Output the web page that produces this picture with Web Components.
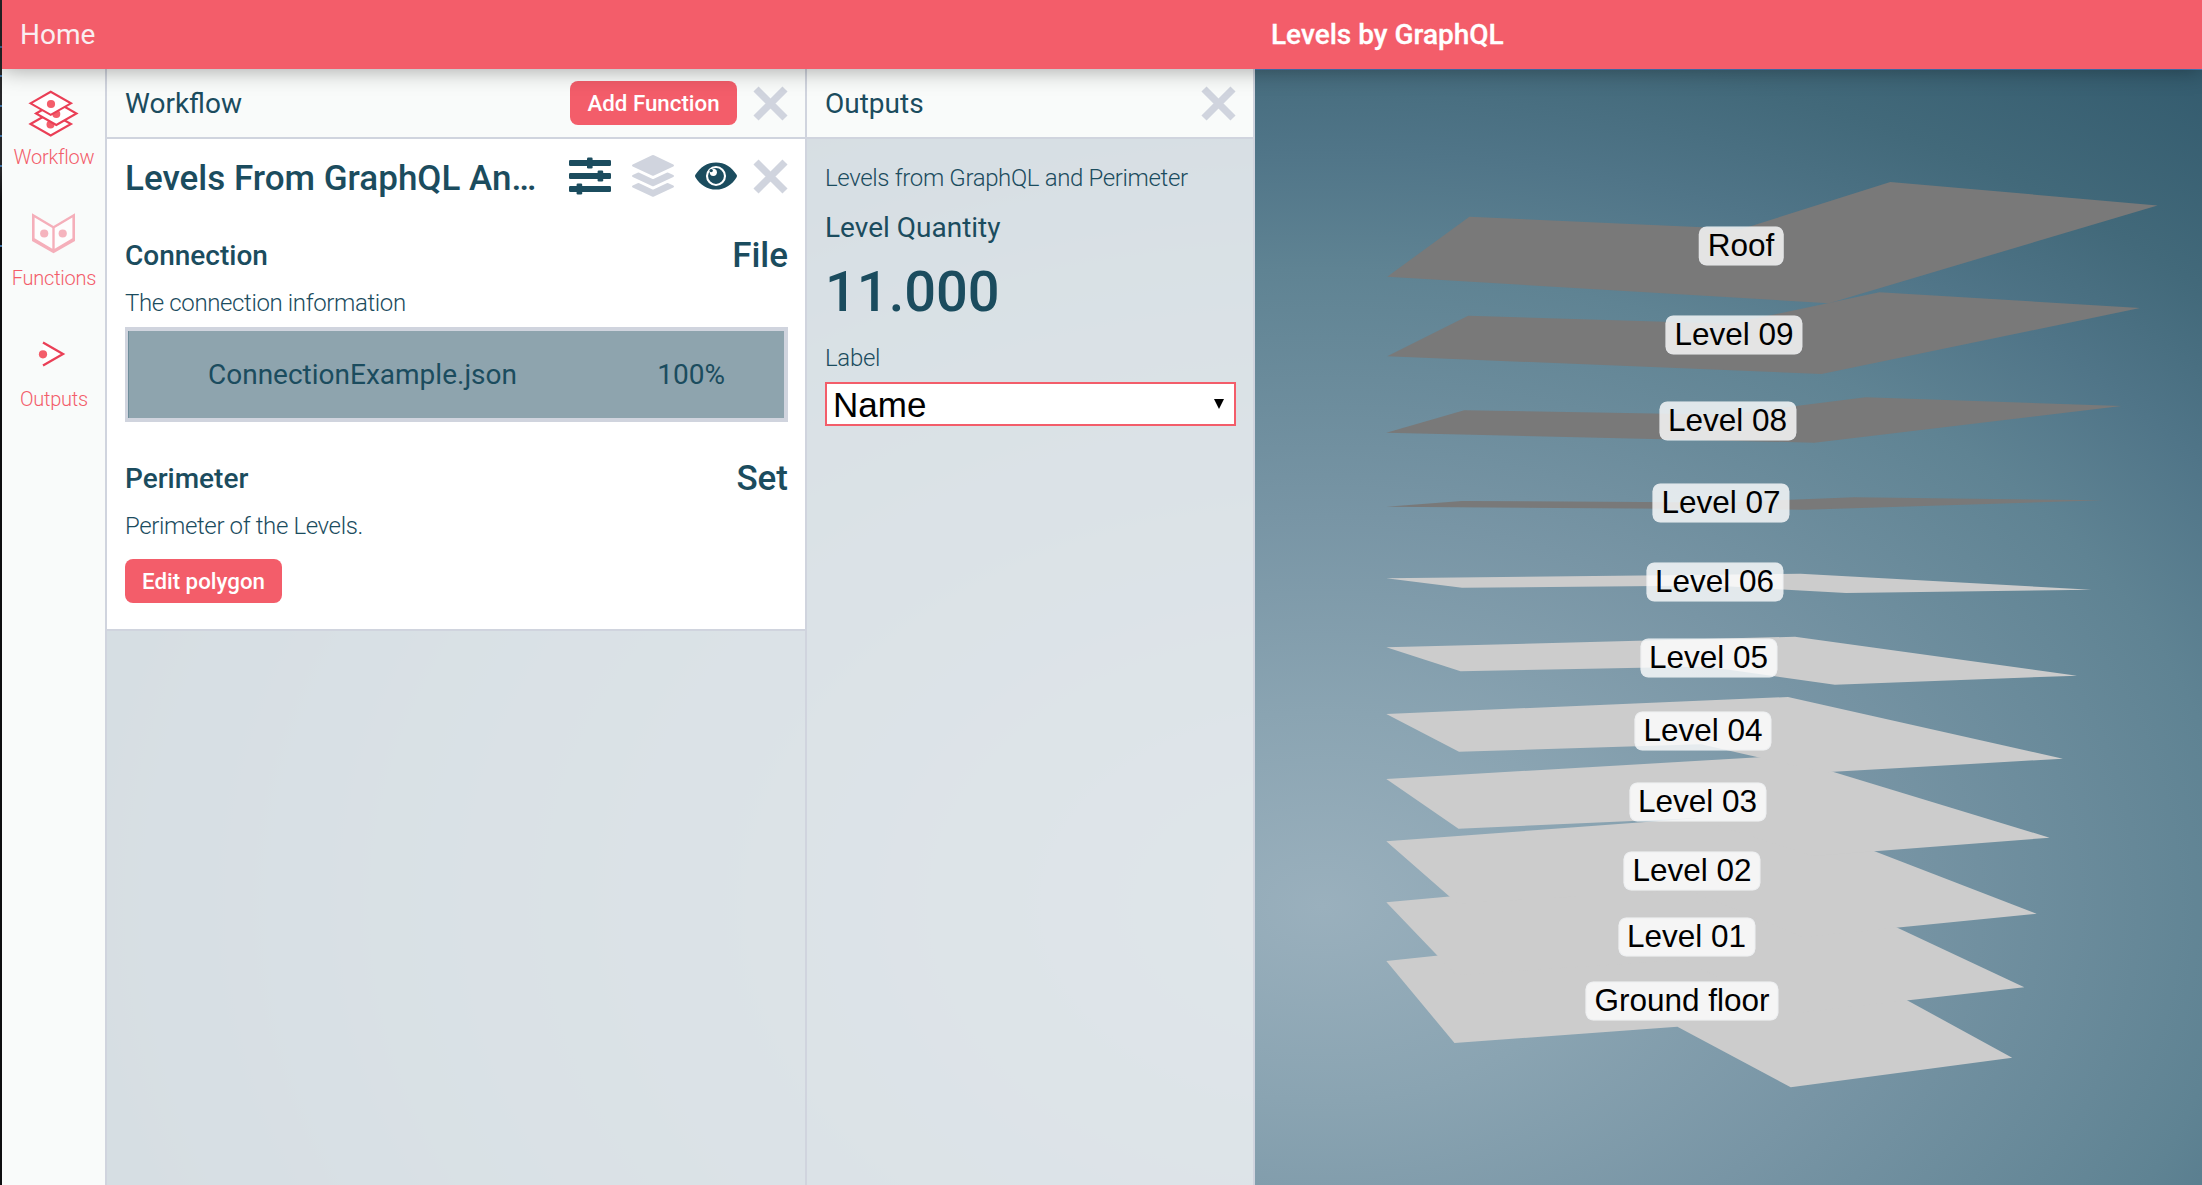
<!DOCTYPE html>
<html lang="en">
<head>
<meta charset="utf-8">
<title>Levels by GraphQL</title>
<style>
html,body{margin:0;height:100%;overflow:hidden}
body{font-family:Roboto,"Liberation Sans",sans-serif;color:#1b4c5e}
</style>
</head>
<body>
<levels-app></levels-app>
<script>
const define = (name, html, setup) => customElements.define(name, class extends HTMLElement {
  constructor() {
    super();
    const t = document.createElement('template');
    t.innerHTML = html;
    this.attachShadow({mode: 'open'}).append(t.content.cloneNode(true));
  }
  connectedCallback() { if (setup && !this.ready) { this.ready = true; setup(this, this.shadowRoot); } }
});

define('window-edge', `<style>
:host{display:block;flex:none;width:2px;background:
linear-gradient(#3c6ea0,#3c6ea0) 0 46px/2px 2px no-repeat,
linear-gradient(#3c6ea0,#3c6ea0) 0 75px/2px 2px no-repeat,
linear-gradient(#3c6ea0,#3c6ea0) 0 105px/2px 2px no-repeat,
linear-gradient(#3c6ea0,#3c6ea0) 0 135px/2px 2px no-repeat,
linear-gradient(#3c6ea0,#3c6ea0) 0 165px/2px 2px no-repeat,
linear-gradient(#3c6ea0,#3c6ea0) 0 245px/2px 2px no-repeat,
linear-gradient(#262628 0 170px,#0e0e10 200px)}
</style>`);

define('top-bar', `<style>
:host{display:flex;align-items:center;height:69px;background:#f35d6a;box-shadow:0 0 22px rgba(0,0,0,.38);position:relative;z-index:2;font-size:28px;line-height:40px;color:#fff;flex:none}
.home{width:1251px;padding-left:18px;color:#f9eef1}
.title{font-weight:500;-webkit-text-stroke:.3px #fff}
</style><div class="home"><slot name="home"></slot></div><div class="title"><slot></slot></div>`);

define('nav-item', `<style>
:host{display:flex;flex-direction:column;align-items:center;height:121px;color:#f35d6a;font-size:20px;font-weight:300;letter-spacing:-.25px;line-height:24px}
.icon{height:76px;display:flex}
.label{padding-left:1px}
::slotted(svg){display:block;width:103px;height:76px}
</style><div class="icon"><slot name="icon"></slot></div><div class="label"><slot></slot></div>`);

define('side-nav', `<style>
:host{display:flex;flex-direction:column;width:103px;flex:none;background:#f9fbfa;border-right:2px solid #d0d4de}
</style><slot></slot>`);

define('close-icon', `<style>:host{display:block;width:35px;height:35px;flex:none}svg{display:block}</style>
<svg width="35" height="35" viewBox="0 0 35 35"><path d="M3 3L32 32M32 3L3 32" stroke="#d0d4de" stroke-width="7.2"/></svg>`);

define('primary-button', `<style>
:host{display:flex;align-items:center;justify-content:center;height:44px;border-radius:8px;background:#f35d6a;color:#fff;font-size:22.3px;font-weight:500;line-height:30px;flex:none;white-space:nowrap}
</style><slot></slot>`);

define('side-panel', `<style>
:host{display:flex;flex-direction:column;flex:none;border-right:2px solid #d0d4de;background:rgba(231,235,238,.9)}
header{height:68px;flex:none;display:flex;align-items:center;padding:0 17px 0 18px;border-bottom:2px solid #d0d4de;background:#f9fbfa;font-size:28px}
.name{flex:1}
.tools{display:flex;align-items:center;gap:16px}
</style><header><div class="name"><slot name="name"></slot></div><div class="tools"><slot name="tools"></slot><close-icon></close-icon></div></header><slot></slot>`);

define('function-card', `<style>
:host{display:block;background:#fff;border-bottom:2px solid #d0d4de;padding:0 17px 26px 18px}
.head{height:74px;display:flex;align-items:center}
.name{width:421px;padding-top:6px;font-size:35px;font-weight:500;line-height:44px;overflow:hidden;text-overflow:ellipsis;white-space:nowrap}
.icons{margin-left:auto;display:flex;align-items:center;gap:21px}
.icons close-icon{margin-left:-5px}
svg{display:block}
</style>
<div class="head"><div class="name"><slot name="name"></slot></div>
<div class="icons">
<svg width="42" height="42" viewBox="0 0 42 42" fill="#1b4c5e"><rect y="5" width="42" height="6" rx="1.2"/><rect y="18" width="42" height="6" rx="1.2"/><rect y="31" width="42" height="6" rx="1.2"/><rect x="18" y="2.5" width="5.6" height="11" rx="1.2"/><rect x="28.6" y="15.5" width="5.6" height="11" rx="1.2"/><rect x="7.6" y="28.5" width="5.6" height="11" rx="1.2"/></svg>
<svg width="42" height="42" viewBox="0 0 42 42" fill="#d0d4de"><path d="M20 .3q1-.5 2 0l19.3 9.3q1.4.9 0 1.8L22 20.6q-1 .5-2 0L.7 11.400q-1.400-.9 0-1.800z"/><path d="M.7 20.100L5.600 17.700q.9-.3 1.700 0L20 23.800q1 .4 2 0l12.700-6.100q.8-.3 1.700 0l4.900 2.400q1.400.9 0 1.800L22 31.100q-1 .5-2 0L.7 21.900q-1.400-.9 0-1.800z"/><path d="M.7 30.600L5.600 28.200q.9-.3 1.700 0L20 34.300q1 .4 2 0l12.700-6.100q.8-.3 1.700 0l4.900 2.400q1.400.9 0 1.800L22 41.600q-1 .5-2 0L.7 32.400q-1.400-.9 0-1.800z"/></svg>
<svg width="42" height="42" viewBox="0 0 42 42"><path d="M.4 19.800C5 12 12.500 7.400 21 7.400s16 4.600 20.600 12.400q.7 1.200 0 2.400C37 30 29.500 34.600 21 34.600S5 30 .4 22.200q-.7-1.200 0-2.400z" fill="#1b4c5e"/><circle cx="21" cy="21" r="9" fill="none" stroke="#fff" stroke-width="2.100"/><circle cx="18.300" cy="17.300" r="3.600" fill="#fff"/><circle cx="16.200" cy="15.600" r="1.700" fill="#1b4c5e"/></svg>
<close-icon></close-icon></div></div><slot></slot>`);

define('function-param', `<style>
:host{display:block}
.row{height:48px;display:flex;align-items:center;justify-content:space-between}
.name{font-size:28px;font-weight:500}
.state{font-size:35px;font-weight:500;line-height:46px;padding-top:2px}
.desc{font-size:24px;font-weight:300;letter-spacing:-.37px;line-height:32px;padding-top:8px;white-space:nowrap}
</style><div class="row"><div class="name"><slot name="name"></slot></div><div class="state"><slot name="state"></slot></div></div>
<div class="desc"><slot name="desc"></slot></div><slot></slot>`);

define('file-drop', `<style>
:host{display:flex;align-items:center;box-sizing:border-box;height:95px;border:4px solid #d0d4de;border-left-width:3px;background:#8ea4ae;box-shadow:inset 1px 0 #6d8d9a;font-size:28px;padding:0 59px 0 80px;justify-content:space-between}
</style><span><slot name="file"></slot></span><span><slot name="progress"></slot></span>`);

define('output-list', `<style>
:host{display:block;padding:0 17px 0 18px}
.source{font-size:24px;font-weight:300;letter-spacing:-.35px;line-height:32px;padding-top:23px}
.metric{font-size:28px;line-height:36px;padding-top:16px}
.value{font-size:56px;font-weight:500;line-height:64px;padding-top:14px}
.field{font-size:24px;font-weight:300;letter-spacing:-.3px;line-height:32px;padding-top:18px}
.select{box-sizing:border-box;height:44px;margin-top:8px;border:2px solid #f35d6a;background:#fff;color:#000;font:35px/40px "Liberation Sans",Arial,sans-serif;display:flex;align-items:center;justify-content:space-between;padding:0 10px 0 6px}
.select span{padding-top:2px}
.select svg{display:block;margin-bottom:1px}
</style>
<div class="source"><slot name="source"></slot></div><div class="metric"><slot name="metric"></slot></div>
<div class="value"><slot name="value"></slot></div><div class="field"><slot name="field"></slot></div>
<div class="select"><span><slot name="choice"></slot></span><svg width="10" height="10" viewBox="0 0 10 10"><path d="M0 0h10L5 10z"/></svg></div>`);

define('level-tag', `<style>
:host{position:absolute;transform:translate(-50%,-50%);box-sizing:border-box;height:39px;padding:0 9px;border-radius:8px;background:rgba(255,255,255,.8);color:#000;font:31.5px/37px "Liberation Sans",Arial,sans-serif;white-space:nowrap;box-shadow:inset 0 0 0 1px rgba(225,230,234,.4)}
</style><slot></slot>`, el => { el.style.left = (el.getAttribute('x') - 1255) + 'px'; el.style.top = (el.getAttribute('y') - 69) + 'px'; });

define('model-view', `<style>
:host{display:block;flex:1;position:relative;overflow:hidden;border-top:1px solid #4a80c4}
svg{display:block;margin-top:-1px}
.tags{position:absolute;left:0;top:-1px}
</style>
<svg width="947" height="1116" viewBox="1255 69 947 1116">
<g fill="#ccc">
<path d="M1386.300 961L1762 921L2012.200 1057.700L1790.700 1087.300L1677.400 1026.700L1454.500 1043z"/>
<path d="M1386.300 902.300L1768 867L2024.300 987.300L1795 1013L1682 960L1456 975z"/>
<path d="M1386.300 841.300L1774 812.500L2036.700 913.700L1803 937L1688 890L1457.500 903.500z"/>
<path d="M1386.300 779L1781 756L2049.600 837.700L1813 856L1695 818.300L1458.500 828.700z"/>
<path d="M1386.300 714L1788 697L2063 758.700L1825 772.300L1701 744.300L1459 751.700z"/>
<path d="M1386.300 647.300L1795 636.700L2077 675.700L1834.800 684.700L1706 666.400L1460.500 671.300z"/>
<path d="M1386.300 578.300L1800.500 573.700L2091.500 589.700L1846 593L1712 585.500L1462 587.700z"/>
</g>
<g fill="#797979">
<path d="M1386.300 506.700L1462 501L1720 502.500L1854 497.300L2103 500.300L1805.800 509.700z"/>
<path d="M1386.300 432.700L1464.200 410.300L1726 414.800L1865.800 397.300L2121.500 406L1814.300 442.700z"/>
<path d="M1387.200 356.300L1468.200 315.700L1730.800 323.700L1879.300 292.300L2140 308L1821.600 374z"/>
<path d="M1387.200 276.700L1469.400 216.800L1741.800 229L1890.300 182L2157.500 205.400L1829 303.300z"/>
</g></svg><div class="tags"><slot></slot></div>`);

define('levels-app', `<style>
:host{display:flex;width:2202px;height:1185px;background:radial-gradient(ellipse 1868px 1300px at 1322px 906px,#9ab0bd 0,#8aa4b2 15%,#7895a5 30%,#5f8393 49%,#507588 58%,#42697a 67%,#325a6d 81%,#1b4c5e 100%)}
.page{flex:1;display:flex;flex-direction:column;min-width:0}
.main{flex:1;display:flex;min-height:0}
.work{width:698px}.out{width:446px}
.add{width:167px}.edit{width:157px;margin-top:16.500px}
.second{margin-top:32px}
file-drop{margin-top:8px}
function-param:first-of-type{margin-top:18px}
</style>
<window-edge></window-edge>
<div class="page">
<top-bar><span slot="home">Home</span>Levels by GraphQL</top-bar>
<div class="main">
<side-nav>
<nav-item><svg slot="icon" viewBox="2 69 103 76"><g fill="#fff" stroke="#ea3f56" stroke-width="2.100"><path d="M30.500 124L50.700 112.500L71 124L50.700 135.500z"/><circle cx="50.500" cy="124.500" r="4" fill="#f35d6a" stroke="none"/><path d="M36 113.500L56.300 102L76.500 113.500L56.300 125z"/><circle cx="56.300" cy="114" r="4" fill="#f35d6a" stroke="none"/><path d="M30.500 103.300L50.700 91.800L71 103.300L50.700 114.800z"/><circle cx="51" cy="104" r="4.100" fill="#f35d6a" stroke="none"/></g></svg>Workflow</nav-item>
<nav-item><svg slot="icon" viewBox="2 190 103 76"><path d="M32 213.300L53.500 226L75 213.300V241L53.500 253.300L32 241z" fill="#f5afba"/><path d="M34.600 217.400L52.300 227.900V248.800L34.600 238.300zM72.400 217.400L54.700 227.900V248.800L72.400 238.300z" fill="#fdfdfd"/><g fill="#f5b3bd"><circle cx="44.200" cy="233.500" r="4.100"/><circle cx="62.700" cy="233.500" r="4.100"/></g></svg>Functions</nav-item>
<nav-item><svg slot="icon" viewBox="2 311 103 76"><path d="M43 342.500L63 354L43 365.500" fill="#fff" stroke="#ea3f56" stroke-width="2.300"/><circle cx="43" cy="354.300" r="4.100" fill="#f35d6a"/></svg>Outputs</nav-item>
</side-nav>
<side-panel class="work"><span slot="name">Workflow</span><primary-button class="add" slot="tools">Add Function</primary-button>
<function-card><span slot="name">Levels From GraphQL And Perimeter</span>
<function-param><span slot="name">Connection</span><span slot="state">File</span><span slot="desc">The connection information</span>
<file-drop><span slot="file">ConnectionExample.json</span><span slot="progress">100%</span></file-drop></function-param>
<function-param class="second"><span slot="name">Perimeter</span><span slot="state">Set</span><span slot="desc">Perimeter of the Levels.</span>
<primary-button class="edit">Edit polygon</primary-button></function-param>
</function-card></side-panel>
<side-panel class="out"><span slot="name">Outputs</span>
<output-list><span slot="source">Levels from GraphQL and Perimeter</span><span slot="metric">Level Quantity</span><span slot="value">11.000</span><span slot="field">Label</span><span slot="choice">Name</span></output-list></side-panel>
<model-view>
<level-tag x="1741" y="245.500">Roof</level-tag>
<level-tag x="1734" y="334.500">Level 09</level-tag>
<level-tag x="1727.500" y="420.500">Level 08</level-tag>
<level-tag x="1721" y="502.500">Level 07</level-tag>
<level-tag x="1714.500" y="581.500">Level 06</level-tag>
<level-tag x="1708.500" y="657.500">Level 05</level-tag>
<level-tag x="1703" y="731">Level 04</level-tag>
<level-tag x="1697.500" y="802">Level 03</level-tag>
<level-tag x="1692" y="870.500">Level 02</level-tag>
<level-tag x="1686.500" y="937">Level 01</level-tag>
<level-tag x="1682" y="1001">Ground floor</level-tag>
</model-view>
</div></div>`);
</script>
</body>
</html>
